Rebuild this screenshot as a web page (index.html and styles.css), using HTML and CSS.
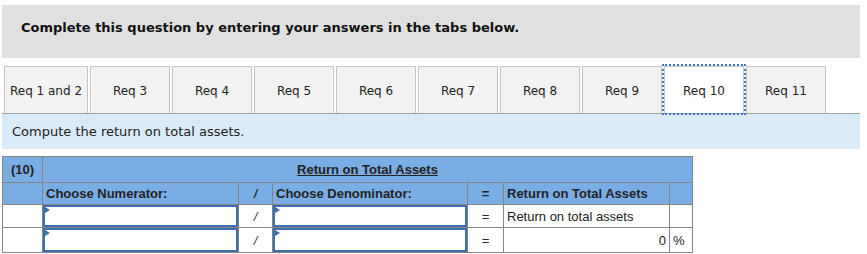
FILE: index.html
```html
<!DOCTYPE html>
<html lang="en">
<head>
  <meta charset="UTF-8" />
  <title>Req 10</title>
  <link rel="stylesheet" href="styles.css">
</head>
<body>
  <div class="intro">Complete this question by entering your answers in the tabs below.</div>

  <div class="tabs">
    <div class="tab wide">Req 1 and 2</div>
    <div class="tab">Req 3</div>
    <div class="tab">Req 4</div>
    <div class="tab">Req 5</div>
    <div class="tab">Req 6</div>
    <div class="tab">Req 7</div>
    <div class="tab">Req 8</div>
    <div class="tab">Req 9</div>
    <div class="tab active">Req 10</div>
    <div class="tab">Req 11</div>
  </div>

  <div class="prompt">Compute the return on total assets.</div>

  <table class="ratio">
    <tr class="head">
      <td class="num">(10)</td>
      <td colspan="6" class="title"><u>Return on Total Assets</u></td>
    </tr>
    <tr class="labels">
      <td></td>
      <td>Choose Numerator:</td>
      <td class="op slash">/</td>
      <td>Choose Denominator:</td>
      <td class="op">=</td>
      <td>Return on Total Assets</td>
      <td></td>
    </tr>
    <tr class="row">
      <td></td>
      <td class="pick"><div class="box"></div></td>
      <td class="op slash">/</td>
      <td class="pick"><div class="box"></div></td>
      <td class="op">=</td>
      <td>Return on total assets</td>
      <td></td>
    </tr>
    <tr class="row last">
      <td></td>
      <td class="pick"><div class="box"></div></td>
      <td class="op slash">/</td>
      <td class="pick"><div class="box"></div></td>
      <td class="op">=</td>
      <td class="amount">0</td>
      <td class="unit">%</td>
    </tr>
  </table>
</body>
</html>
```

FILE: styles.css
```css
body {
  margin: 0;
  padding: 5px 0 0 2px;
  font-family: "DejaVu Sans", Verdana, sans-serif;
  color: #222;
  background: #fff;
}

.intro {
  width: 858px;
  height: 53px;
  box-sizing: border-box;
  padding: 15px 0 0 19px;
  background: #e0e0e0;
  font-size: 13px;
  font-weight: bold;
  color: #111;
}

.tabs {
  display: flex;
  gap: 2px;
  margin-top: 8px;
  padding-left: 2px;
}

.tab {
  width: 80px;
  height: 47px;
  box-sizing: border-box;
  border: 1px solid #c4c4c4;
  border-bottom: none;
  background: #f2f2f2;
  font-size: 12px;
  display: flex;
  align-items: center;
  justify-content: center;
  padding-top: 1px;
}

.tab.wide {
  width: 84px;
}

.tab.active {
  background: #fff;
  outline: 2px dotted #3c74bd;
  position: relative;
  z-index: 1;
}

.prompt {
  width: 858px;
  height: 36px;
  box-sizing: border-box;
  border-top: 1px solid #a0a0a0;
  background: #d9eaf8;
  padding: 10px 0 0 10px;
  font-size: 13px;
}

.ratio {
  margin-top: 7px;
  border-collapse: collapse;
  font-family: "Liberation Sans", Arial, sans-serif;
  font-size: 13px;
  color: #222;
}

.ratio td {
  border: 1px solid #858585;
  padding: 0 3px;
  vertical-align: middle;
}

.ratio td:nth-child(1) { width: 33px; }
.ratio td:nth-child(2) { width: 189px; }
.ratio td:nth-child(3) { width: 27px; }
.ratio td:nth-child(4) { width: 188px; }
.ratio td:nth-child(5) { width: 29px; }
.ratio td:nth-child(6) { width: 159px; }
.ratio td:nth-child(7) { width: 16px; }

.head {
  height: 26px;
}

.head td {
  background: #7aade3;
  font-weight: bold;
}

.head .num {
  text-align: center;
}

.head .title {
  text-align: center;
}

.labels {
  height: 22px;
}

.labels td {
  background: #7aade3;
  font-weight: bold;
}

.row {
  height: 23px;
}

.row.last {
  height: 25px;
}

.op {
  text-align: center;
}

.slash {
  font-style: italic;
  font-weight: normal;
  color: #333;
}

.ratio td.pick {
  padding: 0;
}

.box {
  position: relative;
  height: 22px;
  border: 2px solid #3d6fae;
  box-sizing: border-box;
  background: #fff;
}

.row.last .box {
  height: 24px;
}

.box::before {
  content: "";
  position: absolute;
  top: 0;
  left: 0;
  border-left: 5px solid #3d6fae;
  border-top: 3px solid transparent;
  border-bottom: 3px solid transparent;
}

.amount {
  text-align: right;
}

.unit {
  text-align: left;
}
```
